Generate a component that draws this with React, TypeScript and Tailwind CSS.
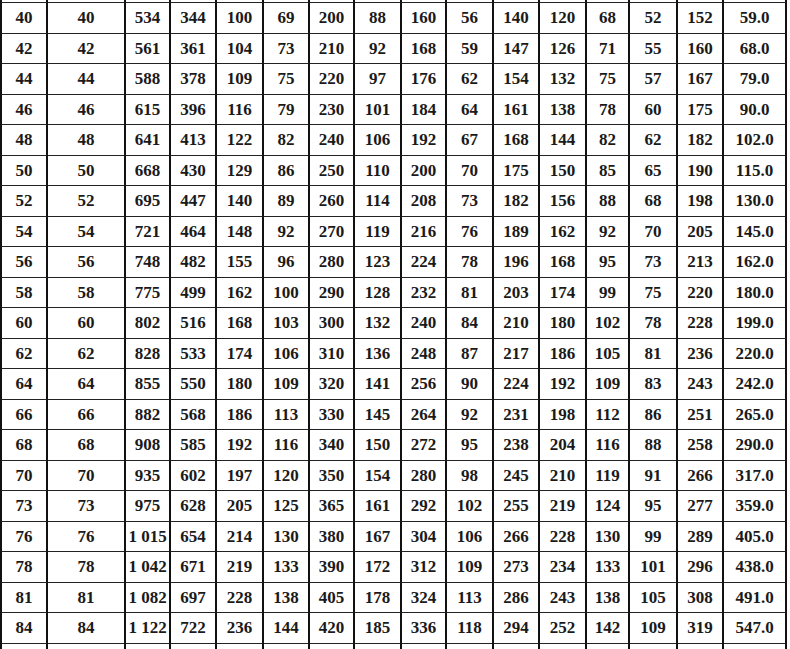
const rows: string[][] = [
  ['40', '40', '534', '344', '100', '69', '200', '88', '160', '56', '140', '120', '68', '52', '152', '59.0'],
  ['42', '42', '561', '361', '104', '73', '210', '92', '168', '59', '147', '126', '71', '55', '160', '68.0'],
  ['44', '44', '588', '378', '109', '75', '220', '97', '176', '62', '154', '132', '75', '57', '167', '79.0'],
  ['46', '46', '615', '396', '116', '79', '230', '101', '184', '64', '161', '138', '78', '60', '175', '90.0'],
  ['48', '48', '641', '413', '122', '82', '240', '106', '192', '67', '168', '144', '82', '62', '182', '102.0'],
  ['50', '50', '668', '430', '129', '86', '250', '110', '200', '70', '175', '150', '85', '65', '190', '115.0'],
  ['52', '52', '695', '447', '140', '89', '260', '114', '208', '73', '182', '156', '88', '68', '198', '130.0'],
  ['54', '54', '721', '464', '148', '92', '270', '119', '216', '76', '189', '162', '92', '70', '205', '145.0'],
  ['56', '56', '748', '482', '155', '96', '280', '123', '224', '78', '196', '168', '95', '73', '213', '162.0'],
  ['58', '58', '775', '499', '162', '100', '290', '128', '232', '81', '203', '174', '99', '75', '220', '180.0'],
  ['60', '60', '802', '516', '168', '103', '300', '132', '240', '84', '210', '180', '102', '78', '228', '199.0'],
  ['62', '62', '828', '533', '174', '106', '310', '136', '248', '87', '217', '186', '105', '81', '236', '220.0'],
  ['64', '64', '855', '550', '180', '109', '320', '141', '256', '90', '224', '192', '109', '83', '243', '242.0'],
  ['66', '66', '882', '568', '186', '113', '330', '145', '264', '92', '231', '198', '112', '86', '251', '265.0'],
  ['68', '68', '908', '585', '192', '116', '340', '150', '272', '95', '238', '204', '116', '88', '258', '290.0'],
  ['70', '70', '935', '602', '197', '120', '350', '154', '280', '98', '245', '210', '119', '91', '266', '317.0'],
  ['73', '73', '975', '628', '205', '125', '365', '161', '292', '102', '255', '219', '124', '95', '277', '359.0'],
  ['76', '76', '1 015', '654', '214', '130', '380', '167', '304', '106', '266', '228', '130', '99', '289', '405.0'],
  ['78', '78', '1 042', '671', '219', '133', '390', '172', '312', '109', '273', '234', '133', '101', '296', '438.0'],
  ['81', '81', '1 082', '697', '228', '138', '405', '178', '324', '113', '286', '243', '138', '105', '308', '491.0'],
  ['84', '84', '1 122', '722', '236', '144', '420', '185', '336', '118', '294', '252', '142', '109', '319', '547.0'],
];

const cols = 16;

// columnas cortadas arriba y abajo del recorte
function Strip({ bottom }: { bottom: boolean }) {
  return (
    <>
      {Array.from({ length: cols }).map((_, i) => (
        <div
          key={i}
          className={`border-r-2 border-[#111] ${i === 0 ? 'border-l-2' : ''} ${
            bottom ? 'border-b border-b-[#222]' : ''
          }`}
        />
      ))}
    </>
  );
}

export default function App() {
  return (
    <div className="w-[790px] h-[649px] overflow-hidden bg-white text-[#1a1a1a] font-['Liberation_Serif','Noto_Sans_CJK_SC',serif]">
      <div className="grid w-[787px] grid-cols-[48px_78px_45px_46px_47px_46px_45px_47px_45px_47px_46px_47px_43px_48px_46px_63px] grid-rows-[3px_repeat(21,30.5px)_10px]">
        <Strip bottom />
        {rows.map((row, r) =>
          row.map((cell, i) => (
            <div
              key={`${r}-${i}`}
              className={`flex items-center justify-center border-r-2 border-b border-[#111] border-b-[#222] text-[17px] font-bold leading-none whitespace-nowrap ${
                i === 0 ? 'border-l-2' : ''
              }`}
            >
              {cell}
            </div>
          ))
        )}
        <Strip bottom={false} />
      </div>
    </div>
  );
}
